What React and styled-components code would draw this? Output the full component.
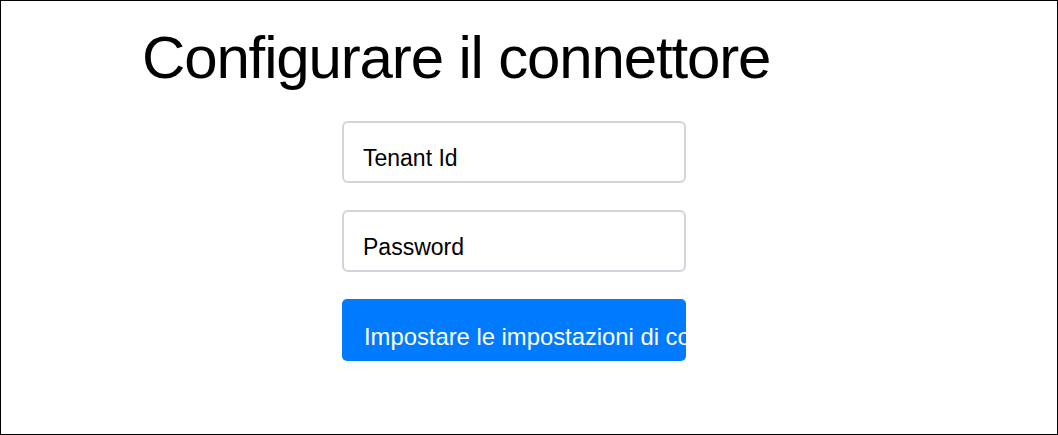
import React from 'react'
import styled, { createGlobalStyle } from 'styled-components'

const Global = createGlobalStyle`
    html, body {
        margin: 0;
        padding: 0;
        background: #fff;
    }
    * {
        box-sizing: border-box;
    }
`

const Page = styled.div`
    width: 1058px;
    height: 435px;
    border: 1px solid #000;
    background: #fff;
    font-family: 'Liberation Sans', Arial, sans-serif;
    overflow: hidden;
`

const Title = styled.h1`
    margin: 22px 0 0 141px;
    font-size: 60px;
    font-weight: 400;
    line-height: 70px;
    letter-spacing: -1.15px;
    color: #000;
`

const Form = styled.form`
    display: flex;
    flex-direction: column;
    gap: 27px;
    width: 344px;
    margin: 28px 0 0 341px;
`

const Field = styled.input`
    width: 100%;
    height: 62px;
    padding: 16px 19px 4px;
    border: 2px solid #d1d4da;
    border-radius: 6px;
    font-family: inherit;
    font-size: 23px;
    color: #000;
    background: #fff;
    outline: none;

    &::placeholder {
        color: #000;
        opacity: 1;
    }
`

const Submit = styled.button`
    width: 100%;
    height: 62px;
    padding: 17px 0 4px 22px;
    border: none;
    border-radius: 5px;
    background: #007bff;
    color: #fff;
    font-family: inherit;
    font-size: 23.8px;
    text-align: left;
    white-space: nowrap;
    overflow: hidden;
    cursor: pointer;
`

const App = () => {
    return (
        <Page>
            <Global />
            <Title>Configurare il connettore</Title>
            <Form onSubmit={(e) => e.preventDefault()}>
                <Field type="text" placeholder="Tenant Id" />
                <Field type="password" placeholder="Password" />
                <Submit type="submit">Impostare le impostazioni di connessione</Submit>
            </Form>
        </Page>
    )
}

export default App
